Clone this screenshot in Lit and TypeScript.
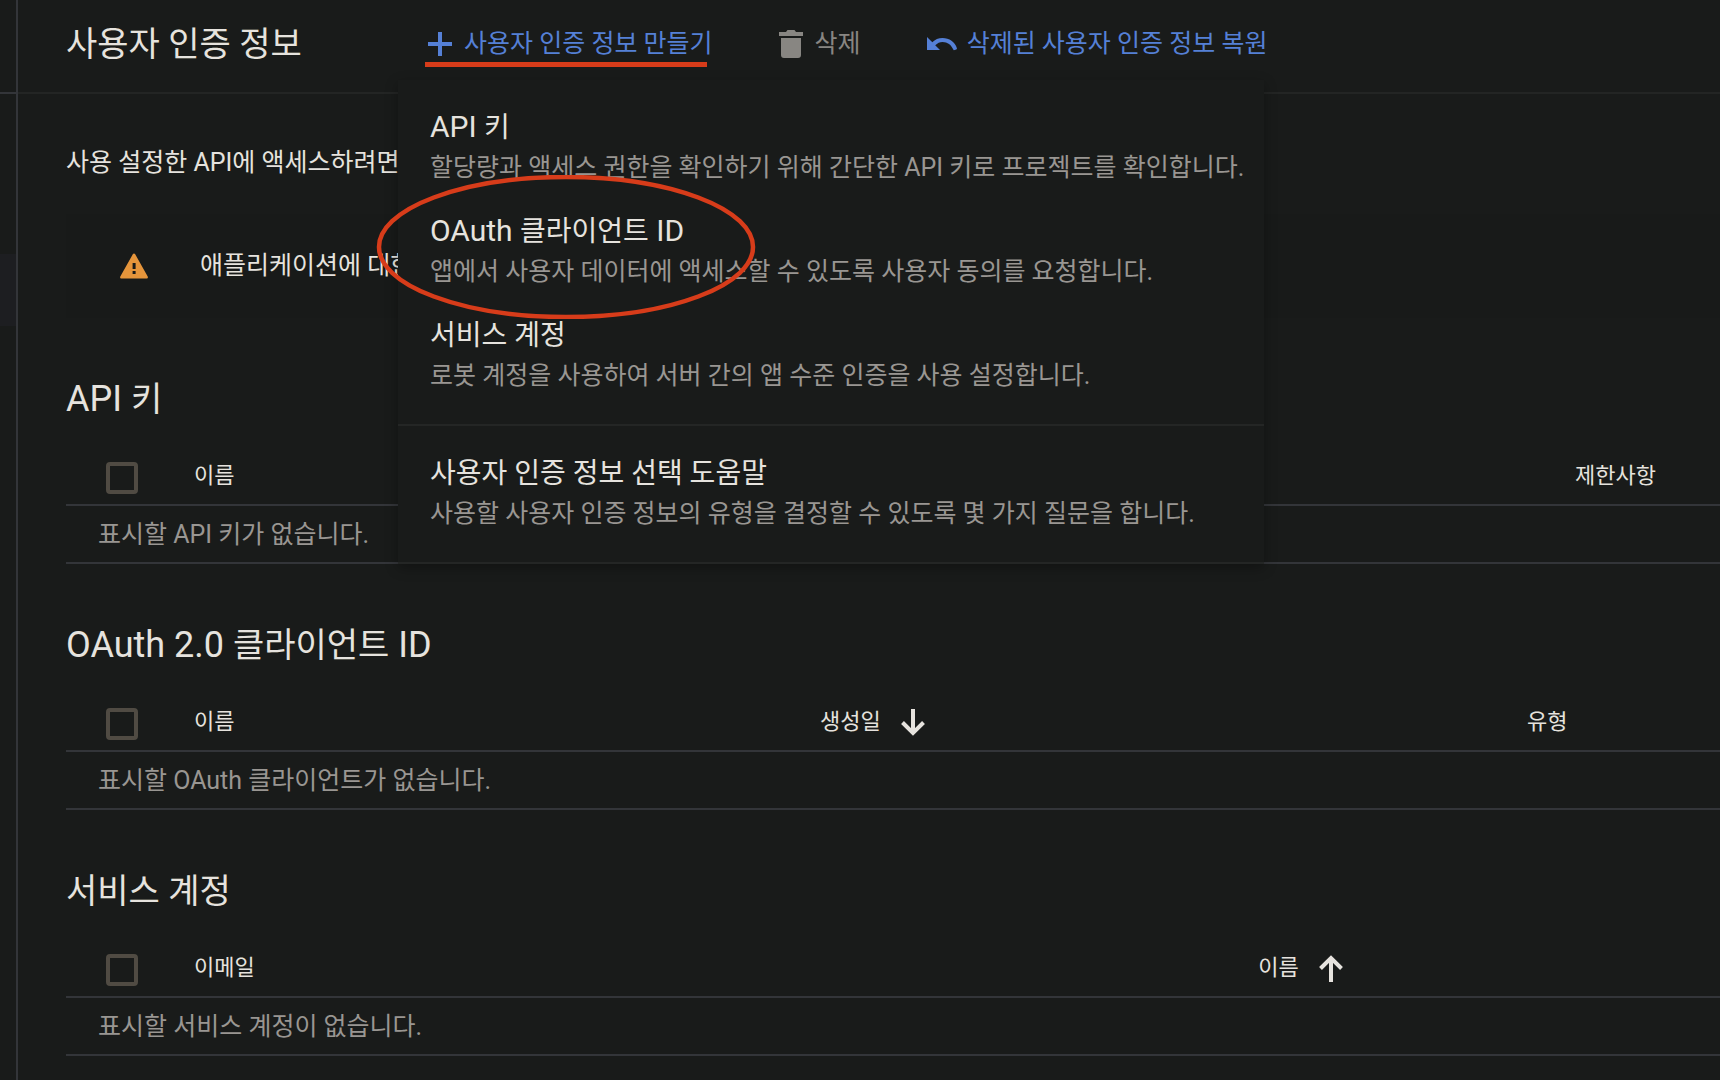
import { LitElement, html, css, svg, nothing } from "lit";
import { customElement, property } from "lit/decorators.js";

type SortDirection = "up" | "down";

interface Column {
  label: string;
  width?: number;
  sort?: SortDirection;
}

interface Section {
  id: string;
  title: string;
  empty: string;
  columns: Column[];
}

interface MenuEntry {
  title: string;
  description: string;
}

const MENU_GROUPS: MenuEntry[][] = [
  [
    {
      title: "API 키",
      description: "할당량과 액세스 권한을 확인하기 위해 간단한 API 키로 프로젝트를 확인합니다.",
    },
    {
      title: "OAuth 클라이언트 ID",
      description: "앱에서 사용자 데이터에 액세스할 수 있도록 사용자 동의를 요청합니다.",
    },
    {
      title: "서비스 계정",
      description: "로봇 계정을 사용하여 서버 간의 앱 수준 인증을 사용 설정합니다.",
    },
  ],
  [
    {
      title: "사용자 인증 정보 선택 도움말",
      description: "사용할 사용자 인증 정보의 유형을 결정할 수 있도록 몇 가지 질문을 합니다.",
    },
  ],
];

const SECTIONS: Section[] = [
  {
    id: "api-keys",
    title: "API 키",
    empty: "표시할 API 키가 없습니다.",
    columns: [{ label: "이름", width: 83.5 }, { label: "제한사항" }],
  },
  {
    id: "oauth-clients",
    title: "OAuth 2.0 클라이언트 ID",
    empty: "표시할 OAuth 클라이언트가 없습니다.",
    columns: [
      { label: "이름", width: 37.85 },
      { label: "생성일", width: 42.75, sort: "down" },
      { label: "유형" },
    ],
  },
  {
    id: "service-accounts",
    title: "서비스 계정",
    empty: "표시할 서비스 계정이 없습니다.",
    columns: [
      { label: "이메일", width: 64.35 },
      { label: "이름", sort: "up" },
    ],
  },
];

// Latin runs in titles are set one step larger than the Hangul beside them.
const mixedTitle = (text: string) =>
  text
    .split(/([A-Za-z0-9. ]*[A-Za-z0-9][A-Za-z0-9. ]*)/)
    .filter((run) => run !== "")
    .map((run) => (/[A-Za-z0-9]/.test(run) ? html`<span class="latin">${run}</span>` : run));

const plusIcon = html`<svg width="26" height="24" viewBox="0 0 26 24" aria-hidden="true">
  <path fill="currentColor" d="M10 0h4v10h10v4H14v10h-4V14H0v-4h10z" />
</svg>`;

const trashIcon = html`<svg width="26" height="28" viewBox="0 0 26 28" aria-hidden="true">
  <path fill="currentColor" d="M0 2h7l1.5-2h7L17 2h7v4H0zM2 8h20v17a3 3 0 0 1-3 3H5a3 3 0 0 1-3-3z" />
</svg>`;

const undoIcon = html`<svg width="30" height="28" viewBox="0 0 30 28" aria-hidden="true">
  <path fill="currentColor" d="M0 7V20H13L8.200 15.300C10.400 13.200 12.800 12 15.500 12c5 0 8.800 2.800 10.800 7.600l0.500 0.600 2.600-0.800 0.600-1C28 12 22.300 8 15.500 8c-4 0-7.500 1.500-10.200 4.200z" />
</svg>`;

const warningIcon = html`<svg width="28" height="26" viewBox="0 0 28 26" aria-hidden="true">
  <path fill="currentColor" fill-rule="evenodd" d="M14 0.500c.5 0 .9.200 1.200.7L27.700 23.500c.6 1-.1 2-1.200 2h-25c-1.100 0-1.800-1-1.200-2L12.800 1.200c.3-.5.700-.7 1.200-.7zM12.600 10v6h3v-6zM12.600 18v3h3v-3z" />
</svg>`;

@customElement("sort-arrow")
class SortArrow extends LitElement {
  static styles = css`
    :host {
      display: inline-flex;
    }
  `;

  @property() direction: SortDirection = "down";

  render() {
    const path =
      this.direction === "down"
        ? svg`<path fill="none" stroke="currentColor" stroke-width="4" d="M12 0V24M1.500 13.500L12 24L22.500 13.500" />`
        : svg`<path fill="none" stroke="currentColor" stroke-width="4" d="M12 27V3M1.500 13.500L12 3L22.500 13.500" />`;
    return html`<svg width="24" height="27" viewBox="0 0 24 27" aria-hidden="true">${path}</svg>`;
  }
}

@customElement("create-menu")
class CreateMenu extends LitElement {
  static styles = css`
    :host {
      display: block;
      background: #191b1a;
      border-bottom: 2px solid #242625;
      box-shadow: 0 4px 12px rgba(0, 0, 0, 0.3);
    }
    .group {
      padding: 16px 0;
    }
    .group + .group {
      border-top: 2px solid #242625;
    }
    .item {
      display: block;
      box-sizing: border-box;
      width: 100%;
      padding: 12px 32px;
      border: 0;
      background: none;
      font-family: inherit;
      text-align: left;
      white-space: nowrap;
      cursor: pointer;
    }
    .title,
    .description {
      display: block;
      line-height: 40px;
    }
    .title {
      font-size: 28px;
      color: #e6e3de;
    }
    .latin {
      font-size: 30px;
      line-height: 1;
      white-space: pre;
    }
    .description {
      font-size: 25px;
      color: #999692;
    }
    .mark {
      position: absolute;
      left: -22px;
      top: 95px;
      pointer-events: none;
    }
  `;

  render() {
    return html`
      ${MENU_GROUPS.map(
        (group) => html`<div class="group" role="group">
          ${group.map(
            (entry) => html`<button class="item" type="button" role="menuitem">
              <span class="title">${mixedTitle(entry.title)}</span>
              <span class="description">${entry.description}</span>
            </button>`,
          )}
        </div>`,
      )}
      <svg class="mark" width="380" height="144" viewBox="0 0 380 144" aria-hidden="true">
        <ellipse cx="190" cy="72" rx="187" ry="70" fill="none" stroke="#d73c1a" stroke-width="4.500" />
      </svg>
    `;
  }
}

@customElement("credential-section")
class CredentialSection extends LitElement {
  static styles = css`
    :host {
      display: block;
      padding-top: 56px;
    }
    .heading {
      margin: 0 0 22px;
      font-size: 34px;
      line-height: 50px;
      font-weight: 400;
    }
    .latin {
      font-size: 36px;
      line-height: 1;
      white-space: pre;
    }
    .table {
      width: 100%;
      border-collapse: separate;
      border-spacing: 0;
      table-layout: fixed;
    }
    .check-col {
      width: 118px;
    }
    .head {
      box-sizing: border-box;
      height: 60px;
      padding: 2px 0 0 10px;
      border-bottom: 2px solid #333539;
      font-size: 22px;
      line-height: 34px;
      font-weight: 400;
      text-align: left;
      white-space: nowrap;
    }
    .head.check {
      padding: 6px 0 0 40px;
    }
    .box {
      display: block;
      box-sizing: border-box;
      width: 32px;
      height: 32px;
      margin: 0;
      appearance: none;
      border: 4px solid #504b43;
      border-radius: 4px;
    }
    .sort {
      display: inline-flex;
      align-items: center;
      gap: 20px;
      padding: 0;
      border: 0;
      background: none;
      color: inherit;
      font: inherit;
      cursor: pointer;
    }
    .empty {
      box-sizing: border-box;
      height: 58px;
      padding: 2px 32px 0;
      border-bottom: 2px solid #333539;
      font-size: 25px;
      line-height: 36px;
      color: #999692;
    }
  `;

  @property({ attribute: false }) section!: Section;

  private renderHead(column: Column) {
    return html`<th class="head" scope="col">
      ${column.sort
        ? html`<button class="sort" type="button">
            ${column.label}<sort-arrow direction=${column.sort}></sort-arrow>
          </button>`
        : column.label}
    </th>`;
  }

  render() {
    const { id, title, empty, columns } = this.section;
    return html`
      <h2 class="heading" id=${id}>${mixedTitle(title)}</h2>
      <table class="table" aria-labelledby=${id}>
        <colgroup>
          <col class="check-col" />
          ${columns.map((c) => html`<col style=${c.width ? `width:${c.width}%` : nothing} />`)}
        </colgroup>
        <thead>
          <tr>
            <th class="head check" scope="col">
              <input class="box" type="checkbox" aria-labelledby=${id} />
            </th>
            ${columns.map((c) => this.renderHead(c))}
          </tr>
        </thead>
        <tbody>
          <tr>
            <td class="empty" colspan=${columns.length + 1}>${empty}</td>
          </tr>
        </tbody>
      </table>
    `;
  }
}

@customElement("app-root")
class AppRoot extends LitElement {
  static styles = css`
    :host {
      display: flex;
      box-sizing: border-box;
      min-height: 100vh;
      overflow: hidden;
      background: #191b1a;
      color: #e6e3de;
      font-family: Roboto, "Noto Sans CJK KR", sans-serif;
    }
    .rail {
      flex: 0 0 16px;
      border-right: 2px solid #333539;
    }
    .rail-top {
      height: 92px;
      border-bottom: 2px solid #333539;
    }
    .rail-active {
      height: 72px;
      margin-top: 160px;
      background: #1d1e21;
    }
    .main {
      flex: 1;
      min-width: 0;
    }
    .header {
      display: flex;
      align-items: center;
      height: 88px;
      padding: 0 48px 4px;
      border-bottom: 2px solid #232524;
    }
    .page-title {
      flex: 0 0 359px;
      margin: 0;
      font-size: 34px;
      line-height: 50px;
      font-weight: 400;
    }
    .actions {
      display: flex;
      align-items: center;
      gap: 66px;
    }
    .create {
      position: relative;
    }
    .action {
      position: relative;
      display: flex;
      align-items: center;
      gap: 10px;
      height: 46px;
      padding: 0;
      border: 0;
      background: none;
      color: #5580d6;
      font-family: inherit;
      font-size: 25px;
      line-height: 36px;
      white-space: nowrap;
      cursor: pointer;
    }
    .action.primary {
      padding-left: 3px;
    }
    .action.primary::after {
      content: "";
      position: absolute;
      left: 0;
      bottom: 0;
      width: 282px;
      height: 5px;
      background: #d73c1a;
    }
    .action:disabled {
      color: #888682;
      cursor: default;
    }
    .menu {
      position: absolute;
      z-index: 1;
      left: -27px;
      top: 59px;
      width: 866px;
    }
    .content {
      padding: 48px 0 22px 48px;
    }
    .intro {
      margin: 0 0 30px;
      font-size: 25px;
      line-height: 42px;
    }
    .notice {
      display: flex;
      align-items: center;
      gap: 52px;
      box-sizing: border-box;
      height: 104px;
      padding: 0 0 0 54px;
      background: #181a19;
      font-size: 25px;
      line-height: 38px;
    }
    .notice-icon {
      display: flex;
      color: #e5953b;
    }
  `;

  render() {
    return html`
      <aside class="rail">
        <div class="rail-top"></div>
        <div class="rail-active"></div>
      </aside>
      <main class="main">
        <header class="header">
          <h1 class="page-title">사용자 인증 정보</h1>
          <div class="actions">
            <div class="create">
              <button class="action primary" type="button" aria-haspopup="menu" aria-expanded="true">
                ${plusIcon}사용자 인증 정보 만들기
              </button>
              <create-menu class="menu" role="menu"></create-menu>
            </div>
            <button class="action" type="button" disabled>${trashIcon}삭제</button>
            <button class="action" type="button">${undoIcon}삭제된 사용자 인증 정보 복원</button>
          </div>
        </header>
        <div class="content">
          <p class="intro">사용 설정한 API에 액세스하려면</p>
          <div class="notice" role="note">
            <span class="notice-icon">${warningIcon}</span>
            <span>애플리케이션에 대한</span>
          </div>
          ${SECTIONS.map((s) => html`<credential-section .section=${s}></credential-section>`)}
        </div>
      </main>
    `;
  }
}
